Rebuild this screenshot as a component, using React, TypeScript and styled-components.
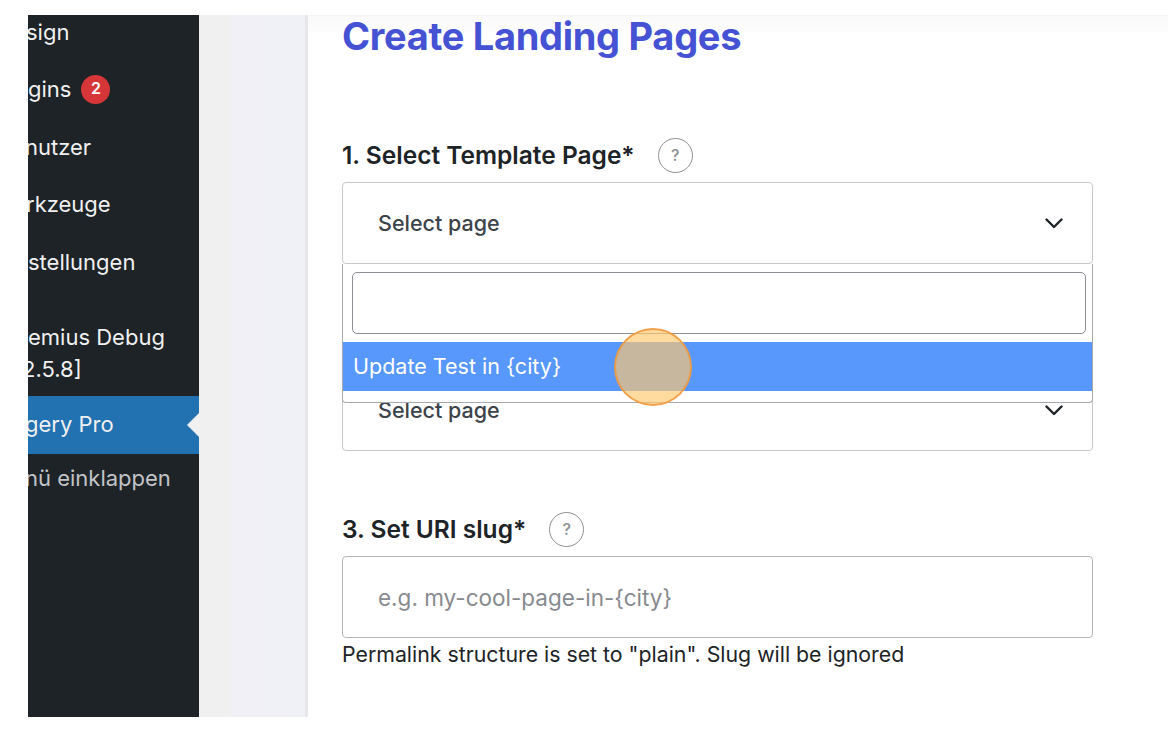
import React from "react";
import styled, { createGlobalStyle } from "styled-components";

const GlobalStyle = createGlobalStyle`
  html, body { margin: 0; padding: 0; background: #fff; }
  body { font-family: Inter, "Noto Sans", "Liberation Sans", sans-serif; -webkit-font-smoothing: antialiased; }
  * { box-sizing: border-box; }
`;

const Page = styled.div`
  width: 1168px;
  height: 732px;
  padding-left: 28px;
  display: flex;
  background: #fff;
  overflow: hidden;
`;

const Sidebar = styled.nav`
  width: 171px;
  flex: none;
  margin: 15px 0;
  background: #1d2327;
  overflow: hidden;
  display: flex;
  flex-direction: column;
`;

const MenuList = styled.div`
  display: flex;
  flex-direction: column;
  margin-top: -11.5px;
`;

const MenuItem = styled.div<{ $active?: boolean; $muted?: boolean; $shift?: number }>`
  position: relative;
  padding: 13px 0;
  line-height: 31.5px;
  font-size: 22px;
  font-weight: 400;
  white-space: nowrap;
  color: ${(p) => (p.$muted ? "#c3c4c7" : "#f0f0f1")};
  background: ${(p) => (p.$active ? "#2271b1" : "transparent")};
  text-indent: ${(p) => (p.$shift ? `${-p.$shift}px` : "0")};
  ${(p) =>
    p.$active &&
    `
    &::after {
      content: "";
      position: absolute;
      right: 0;
      top: 50%;
      margin-top: -12px;
      border: 12px solid transparent;
      border-right-color: #f0f0f1;
      border-left-width: 0;
      width: 0;
      height: 0;
    }
  `}
`;

const Separator = styled.div`
  height: 18px;
`;

const TwoLineItem = styled(MenuItem)`
  padding-bottom: 11px;
`;

const CutLine = styled.span`
  display: inline-block;
  margin-left: -6px;
`;

const CollapseItem = styled(MenuItem)`
  padding-top: 9px;
`;

const Badge = styled.span`
  display: inline-flex;
  align-items: center;
  justify-content: center;
  width: 29px;
  height: 29px;
  margin-left: 10px;
  border-radius: 50%;
  background: #d63638;
  color: #fff;
  font-size: 16px;
  font-weight: 600;
  text-indent: 0;
  vertical-align: middle;
  position: relative;
  top: -2px;
`;

const Gutter = styled.div`
  width: 109px;
  flex: none;
  margin: 15px 0;
  background: linear-gradient(
    to right,
    #f0f0f1 0,
    #f0f0f1 32px,
    #f0f0f6 32px,
    #f0f1f6 106px,
    #e7e7ea 106px,
    #e7e7ea 109px
  );
`;

const Main = styled.main`
  flex: 1;
  height: 732px;
  padding: 13px 75px 0 34px;
  background: linear-gradient(to bottom, #fff 0, #fff 15px, #f4f4f4 15px, #fafafa 17px, #fcfcfc 31px, #fff 32px);
`;

const Heading = styled.h1`
  margin: 0;
  font-size: 38px;
  line-height: 46px;
  font-weight: 700;
  color: #4552d3;
  letter-spacing: -0.3px;
`;

const Form = styled.div`
  margin-top: 78px;
  display: flex;
  flex-direction: column;
  gap: 60px;
`;

const Section = styled.div`
  display: flex;
  flex-direction: column;
  gap: 9px;
`;

const LabelRow = styled.div<{ $covered?: boolean }>`
  height: 36px;
  display: flex;
  align-items: center;
  gap: 23px;
  visibility: ${(p) => (p.$covered ? "hidden" : "visible")};
`;

const LabelText = styled.span`
  font-size: 24.5px;
  font-weight: 600;
  color: #1d2327;
`;

const HelpIcon = styled.span`
  width: 35px;
  height: 35px;
  border-radius: 50%;
  border: 1.5px solid #8c8f94;
  display: inline-flex;
  align-items: center;
  justify-content: center;
  color: #8c8f94;
  font-size: 16px;
  font-weight: 500;
`;

const SelectWrap = styled.div`
  position: relative;
`;

const SelectBox = styled.div`
  height: 82px;
  border: 1px solid #c6c8cb;
  border-radius: 4px;
  padding: 0 29px 0 35px;
  display: flex;
  align-items: center;
  justify-content: space-between;
  background: #fff;
`;

const SelectValue = styled.span`
  font-size: 21.5px;
  font-weight: 500;
  color: #3c434a;
`;

const Dropdown = styled.div`
  position: absolute;
  left: 0;
  right: 0;
  top: 100%;
  z-index: 5;
  background: #fff;
  border: 1px solid #a7aaad;
  border-top: none;
  border-radius: 0 0 4px 4px;
  padding: 8px 0 11px;
  display: flex;
  flex-direction: column;
  gap: 8px;
`;

const SearchInput = styled.input`
  height: 62px;
  margin: 0 6px 0 9px;
  border: 1.5px solid #8c8f94;
  border-radius: 5px;
  background: #fff;
  outline: none;
  font-size: 21px;
  font-family: inherit;
`;

const Option = styled.div`
  position: relative;
  height: 49px;
  line-height: 49px;
  padding-left: 10px;
  background: #5897fb;
  color: #fff;
  font-size: 21.5px;
  font-weight: 400;
`;

const ClickMarker = styled.span`
  position: absolute;
  left: 271px;
  top: 50%;
  width: 78px;
  height: 78px;
  margin-top: -39px;
  border-radius: 50%;
  border: 2px solid rgba(240, 150, 60, 0.85);
  background: rgba(255, 200, 110, 0.66);
`;

const FieldGroup = styled.div`
  display: flex;
  flex-direction: column;
  gap: 3px;
`;

const TextInput = styled.input`
  height: 82px;
  border: 1px solid #b4b7ba;
  border-radius: 4px;
  padding: 0 20px 0 35px;
  font-family: inherit;
  font-size: 22.5px;
  color: #1d2327;
  outline: none;
  &::placeholder {
    color: #878a8f;
  }
`;

const HelpText = styled.p`
  margin: 0;
  font-size: 21.3px;
  line-height: 26px;
  color: #1d2327;
`;

const Chevron = () => (
  <svg width="18" height="11" viewBox="0 0 18 11" fill="none">
    <polyline points="1.5,1.5 9,9 16.5,1.5" stroke="#1d2327" strokeWidth="2.4" strokeLinecap="round" strokeLinejoin="round" />
  </svg>
);

const Select = ({ children }: { children?: React.ReactNode }) => (
  <SelectWrap>
    <SelectBox>
      <SelectValue>Select page</SelectValue>
      <Chevron />
    </SelectBox>
    {children}
  </SelectWrap>
);

export default function App() {
  return (
    <>
      <GlobalStyle />
      <Page>
        <Sidebar>
          <MenuList>
            <MenuItem $shift={2}>sign</MenuItem>
            <MenuItem>
              gins<Badge>2</Badge>
            </MenuItem>
            <MenuItem $shift={3}>nutzer</MenuItem>
            <MenuItem $shift={2}>rkzeuge</MenuItem>
            <MenuItem>stellungen</MenuItem>
            <Separator />
            <TwoLineItem>
              emius Debug
              <br />
              <CutLine>2.5.8]</CutLine>
            </TwoLineItem>
            <MenuItem $active $shift={3}>gery Pro</MenuItem>
            <CollapseItem $muted $shift={3}>nü einklappen</CollapseItem>
          </MenuList>
        </Sidebar>
        <Gutter />
        <Main>
          <Heading>Create Landing Pages</Heading>
          <Form>
            <Section>
              <LabelRow>
                <LabelText>1. Select Template Page*</LabelText>
                <HelpIcon>?</HelpIcon>
              </LabelRow>
              <Select>
                <Dropdown>
                  <SearchInput />
                  <Option>
                    Update Test in {"{city}"}
                    <ClickMarker />
                  </Option>
                </Dropdown>
              </Select>
            </Section>
            <Section>
              <LabelRow $covered>
                <LabelText>2.</LabelText>
                <HelpIcon>?</HelpIcon>
              </LabelRow>
              <Select />
            </Section>
            <Section>
              <LabelRow>
                <LabelText>3. Set URI slug*</LabelText>
                <HelpIcon>?</HelpIcon>
              </LabelRow>
              <FieldGroup>
                <TextInput placeholder="e.g. my-cool-page-in-{city}" />
                <HelpText>Permalink structure is set to "plain". Slug will be ignored</HelpText>
              </FieldGroup>
            </Section>
          </Form>
        </Main>
      </Page>
    </>
  );
}
